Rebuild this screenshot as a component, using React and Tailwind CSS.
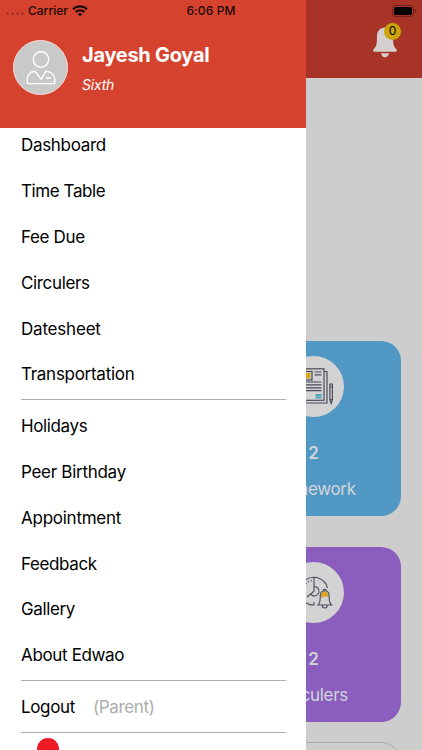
const MAIN_LINKS = [
  { label: 'Dashboard', spacing: 'tracking-[-0.32px]' },
  { label: 'Time Table', spacing: 'tracking-[-0.42px]' },
  { label: 'Fee Due', spacing: 'tracking-[-0.35px]' },
  { label: 'Circulers', spacing: 'tracking-[-0.35px]' },
  { label: 'Datesheet', spacing: 'tracking-[-0.2px]' },
  { label: 'Transportation', spacing: 'tracking-[-0.28px]' },
];

const MORE_LINKS = [
  { label: 'Holidays', spacing: 'tracking-[-0.37px]' },
  { label: 'Peer Birthday', spacing: 'tracking-[-0.28px]' },
  { label: 'Appointment', spacing: 'tracking-[-0.25px]' },
  { label: 'Feedback', spacing: 'tracking-[-0.37px]' },
  { label: 'Gallery', spacing: 'tracking-[-0.37px]' },
  { label: 'About Edwao', spacing: 'tracking-[-0.35px]' },
];

const WifiIcon = () => (
  <svg width="16" height="12" viewBox="0 0 16 12" className="ml-[4px]">
    <path d="M1 4.2a10.2 10.2 0 0 1 14 0" fill="none" stroke="#1b0806" strokeWidth="2.3" />
    <path d="M3.5 7a6.6 6.6 0 0 1 9 0" fill="none" stroke="#1b0806" strokeWidth="2" />
    <path d="M5.7 9a3.5 3.5 0 0 1 4.6 0L8 11.5Z" fill="#1b0806" />
  </svg>
);

const StatusBar = () => (
  <div className="absolute inset-x-0 top-0 z-20 grid h-[21px] grid-cols-3 items-center text-[12px] font-medium text-[#1b0806]">
    <div className="flex items-center pl-[6px]">
      <div className="mt-[6px] mr-[4px] flex gap-[2px]">
        {[0, 1, 2, 3].map((dot) => (
          <span key={dot} className="h-[3px] w-[3px] rounded-full bg-[#a83528]" />
        ))}
      </div>
      <span>Carrier</span>
      <WifiIcon />
    </div>
    <div className="text-center tracking-[0.1px]">6:06 PM</div>
    <div className="flex justify-end pr-[5px]">
      <svg width="25" height="12" viewBox="0 0 25 12">
        <rect x="0.5" y="0.5" width="21" height="11" rx="3" fill="none" stroke="#702219" />
        <rect x="2" y="2" width="18" height="8" rx="1.7" fill="#000" />
        <path d="M23 4q1.600 0.400 1.600 2T23 8Z" fill="#702219" />
      </svg>
    </div>
  </div>
);

const NewspaperIcon = () => (
  <svg width="48" height="40" viewBox="0 0 48 40" fill="none" stroke="#4a4b5c" strokeWidth="1.2">
    <path d="M34 5.500h3v31.500H8v-2.500" />
    <rect x="5" y="2.800" width="29" height="31.500" />
    <rect x="9" y="5.500" width="13" height="8.500" />
    <rect x="12" y="7" width="8.500" height="5.500" fill="#d9a51b" stroke="none" />
    <path d="M24.500 6h7M24.500 8.800h7M8 16h23.500M8 18.900h23.500M8 21.800h23.500M8 24.700h23.500" />
    <path d="M25.500 29h6M25.500 31.500h6" stroke="#4ba6b8" strokeWidth="1.800" />
    <path d="M39.900 18h2.500v15.500l-1.250 4-1.250-4ZM39.900 21h2.500M40 33.500h2.400" />
  </svg>
);

const ClockBellIcon = () => (
  <svg width="44" height="36" viewBox="0 0 44 36" fill="none" stroke="#4a4b5c" strokeWidth="1.1">
    <path d="M22 31.200a14 14 0 0 1-8-2.500M14 5.800a14 14 0 0 1 21.500 8.200M22 3.200v14L15 23M22 28v3.200" />
    <path d="M20 6.500A11 11 0 0 0 11.500 15" strokeDasharray="1.5 1.5" />
    <path d="M22 12.500a4.700 4.700 0 1 1-3 8" />
    <path d="M29 24q-.5-5.500 3.500-7 4 1 4 7-1.800-2.800-7.500 0Z" fill="#d9a51b" stroke="none" />
    <path d="M31 17q0-1.800 1.700-1.800t1.700 1.800M26 31c2.500-2.500 2.200-4.500 2.200-8.500 0-3.800 1.800-5.700 4.500-5.700s4.500 1.900 4.500 5.700c0 4-.3 6 2.300 8.500ZM30.200 31.500a2.500 2.500 0 0 0 5 0" />
  </svg>
);

const PersonIcon = () => (
  <svg width="30" height="34" viewBox="0 0 30 34" fill="none" stroke="#fff" strokeWidth="1.4" strokeLinejoin="round">
    <circle cx="15" cy="8.500" r="7.700" />
    <path d="M1.300 32.600V28.500c0-4.500 3-8 7.700-8.300l6.200 8.200 4.800-8.200c5 .3 8.800 3.800 8.800 8.300v4.100ZM20 27h5" />
  </svg>
);

const SummaryCard = ({ icon, count, label, color }) => (
  <div className={`flex h-[175px] w-[175px] flex-col items-center rounded-[20px] pt-[15px] text-[#d2d5d8] ${color}`}>
    <div className="flex h-[61px] w-[61px] items-center justify-center rounded-full bg-[#d3d3d3]">{icon}</div>
    <div className="mt-[24px] text-[17px] leading-6 font-semibold">{count}</div>
    <div className="mt-[12px] text-[17px] leading-6 tracking-[-0.35px]">{label}</div>
  </div>
);

const MenuLink = ({ label, spacing }) => (
  <li className={`flex h-[45.85px] items-center pt-[2px] ${spacing}`}>{label}</li>
);

const Divider = () => (
  <div className="flex h-[5.8px] items-center">
    <div className="h-px w-full bg-[#adadad]" />
  </div>
);

const Drawer = () => (
  <aside className="absolute inset-y-0 left-0 z-10 flex w-[305.5px] flex-col overflow-hidden bg-white">
    <header className="relative z-10 flex h-[128px] shrink-0 bg-[#d5432f] pt-[40px] pl-[13px] text-white">
      <div className="flex h-[55px] w-[55px] items-center justify-center rounded-full border border-[#f8dcd8] bg-[#c9c9c9]">
        <PersonIcon />
      </div>
      <div className="ml-[14px] pt-[2px]">
        <h1 className="text-[20px] leading-[26px] font-bold tracking-[-0.28px]">Jayesh Goyal</h1>
        <p className="mt-[7px] text-[14px] leading-5 tracking-[-0.2px] italic">Sixth</p>
      </div>
    </header>

    <nav className="-mt-[6px] pr-[20px] pl-[21px] text-[17px] text-black">
      <ul>
        {MAIN_LINKS.map((link) => (
          <MenuLink key={link.label} {...link} />
        ))}
      </ul>
      <Divider />
      <ul>
        {MORE_LINKS.map((link) => (
          <MenuLink key={link.label} {...link} />
        ))}
      </ul>
      <Divider />
      <div className="flex h-[45.85px] items-center pt-[2px]">
        <span className="tracking-[-0.35px]">Logout</span>
        <span className="ml-[18px] tracking-[-0.35px] text-[#adadad]">(Parent)</span>
      </div>
      <Divider />
      <div className="mt-[3px] ml-[16px] h-[22px] w-[22px] rounded-full bg-[#ee1b24]" />
    </nav>
  </aside>
);

export default function App() {
  return (
    <div className="relative h-[750px] w-[422px] overflow-hidden bg-[#cdcdcd] font-['Inter','Liberation_Sans',sans-serif]">
      <StatusBar />

      {/* Dimmed home screen behind the drawer */}
      <header className="flex h-[77.5px] justify-end bg-[#a83427] pt-[22.5px] pr-[21px]">
        <div className="relative h-[36px] w-[28px]">
          <svg width="24" height="31" viewBox="0 0 24 31" className="mt-[4.500px]" fill="#d5d0cf">
            <path d="M12 .5C7.500.5 4 4 4 9c0 7.500-.3 10-3.500 13.500-.8 1-.3 2.200.9 2.200h21.200c1.200 0 1.700-1.200.9-2.200C20.300 19 20 16.500 20 9c0-5-3.500-8.500-8-8.500ZM8 26.300h8c-.5 2.600-2 4-4 4s-3.500-1.400-4-4Z" />
          </svg>
          <span className="absolute top-0 right-0 flex h-[17px] w-[17px] items-center justify-center rounded-full bg-[#cba50b] text-[12px] text-black">
            0
          </span>
        </div>
      </header>
      <main className="flex flex-col items-end gap-[31px] pt-[263px] pr-[21px]">
        <SummaryCard icon={<NewspaperIcon />} count="2" label="Homework" color="bg-[#5198c4]" />
        <SummaryCard icon={<ClockBellIcon />} count="2" label="Circulers" color="bg-[#8a5dbf]" />
        <div className="-mt-[11px] h-[50px] w-[175px] rounded-[20px] border border-[#a7a7a7]" />
      </main>

      <Drawer />
    </div>
  );
}
